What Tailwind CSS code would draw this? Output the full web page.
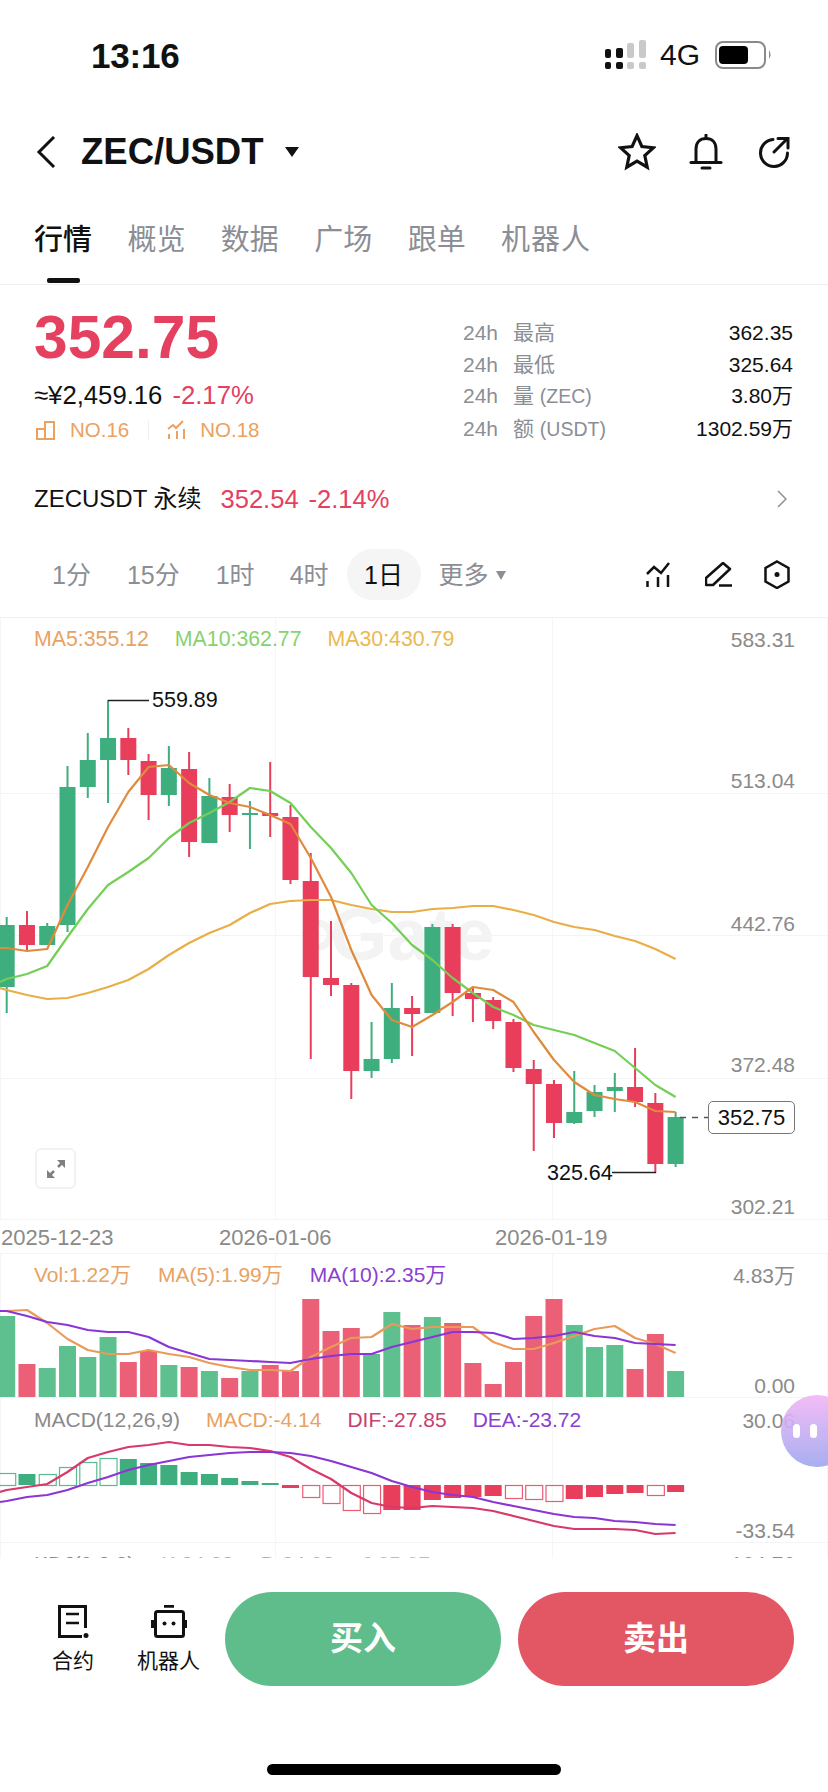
<!DOCTYPE html>
<html lang="zh">
<head>
<meta charset="utf-8">
<title>ZEC/USDT</title>
<script src="https://cdn.jsdelivr.net/npm/@tailwindcss/browser@4"></script>
</head>
<body class="bg-white">
<div class="relative w-[828px] h-[1792px] overflow-hidden bg-white text-[#111] font-['Liberation_Sans','Noto_Sans_CJK_SC',sans-serif]">

  <!-- status bar -->
  <div class="h-[110px] flex items-center justify-between pl-[91px] pr-[55px]">
    <span class="text-[35px] leading-[35px] font-bold tracking-[-0.2px]">13:16</span>
    <div class="flex items-center">
      <svg width="42" height="30" viewBox="606 40 42 30">
        <g fill="#111"><rect x="606" y="49" width="6" height="9" rx="2"/><rect x="617" y="48" width="7" height="10" rx="2"/><rect x="606" y="62" width="6" height="7" rx="2"/><rect x="617" y="62" width="7" height="7" rx="2"/></g>
        <g fill="#c9c9c9"><rect x="628" y="43" width="7" height="15" rx="2"/><rect x="640" y="40" width="7" height="18" rx="2"/><rect x="628" y="62" width="7" height="7" rx="2"/><rect x="640" y="62" width="7" height="7" rx="2"/></g>
      </svg>
      <span class="ml-[13px] text-[30px] leading-[30px]">4G</span>
      <svg class="ml-[15px]" width="58" height="28" viewBox="715 41 58 28">
        <rect x="716" y="42" width="49" height="26" rx="7" fill="none" stroke="#8a8a8a" stroke-width="2"/>
        <rect x="719" y="46" width="29" height="18" rx="4" fill="#000"/>
        <path d="M769 50q3 4.500 0 9z" fill="#8a8a8a"/>
      </svg>
    </div>
  </div>

  <!-- header -->
  <div class="h-[84px] flex items-center pl-[36px] pr-[38px]">
    <svg width="20" height="32" viewBox="0 0 20 32" fill="none" stroke="#111" stroke-width="3"><path d="M18 1 3 16l15 15"/></svg>
    <span class="ml-[25px] text-[36.500px] leading-[40px] font-bold">ZEC/USDT</span>
    <svg class="ml-[21px]" width="14" height="10" viewBox="0 0 14 10"><path d="M0 0h14L7 10z" fill="#111"/></svg>
    <div class="ml-auto flex items-center">
      <svg width="38" height="38" viewBox="0 0 36 36" fill="none" stroke="#111" stroke-width="3" stroke-linejoin="miter"><path d="M18 2.500l4.600 10.300 11 1.200-8.200 7.400 2.300 11L18 26.600 8.300 32.400l2.300-11L2.400 14l11-1.200z"/></svg>
      <svg class="ml-[33.500px]" width="34" height="36" viewBox="0 0 34 36" fill="none" stroke="#111" stroke-width="3" stroke-linecap="round"><path d="M7 28V15C7 8.500 11 4.500 17 4.500S27 8.500 27 15v13"/><path d="M2 28.500h30"/><path d="M17 1v3"/><path d="M13 34h8" stroke-width="3"/></svg>
      <svg class="ml-[35px]" width="32" height="32" viewBox="0 0 32 32" fill="none" stroke="#111" stroke-width="3" stroke-linecap="round"><path d="M15 3.500A13.500 13.500 0 1 0 29.500 17"/><path d="M16 16 29 3"/><path d="M20 2.500h10V12"/></svg>
    </div>
  </div>

  <!-- tabs -->
  <div class="h-[91px] flex gap-[35.400px] pl-[34px] pr-[35px] border-b border-[#efefef] text-[29px] leading-[28px] text-[#8b8e94]">
    <div class="flex flex-col items-center pt-[32px]"><span class="text-[#111] font-medium">行情</span><span class="mt-[24px] w-[33px] h-[5px] rounded-[2px] bg-[#111]"></span></div>
    <div class="pt-[32px]">概览</div>
    <div class="pt-[32px]">数据</div>
    <div class="pt-[32px]">广场</div>
    <div class="pt-[32px]">跟单</div>
    <div class="pt-[32px] tracking-[1px]">机器人</div>
  </div>

  <!-- price stats -->
  <div class="h-[185px] flex justify-between pl-[34px] pr-[35px]">
    <div class="pt-[22px]">
      <div class="text-[60.500px] leading-[60px] font-bold text-[#e5405f]">352.75</div>
      <div class="mt-[13px] flex text-[25.700px] leading-[30px] gap-[10px]"><span>≈¥2,459.16</span><span class="text-[#e5405f]">-2.17%</span></div>
      <div class="mt-[8px] flex items-center text-[20.500px] leading-[24px] text-[#eba15f]">
        <svg class="ml-[2px]" width="20" height="20" viewBox="0 0 20 20" fill="none" stroke="#eba15f" stroke-width="2"><path d="M1 9h8v10H1zM9 2h9v17H9z"/></svg>
        <span class="ml-[14px]">NO.16</span>
        <span class="ml-[19px] w-px h-[20px] bg-[#f0f0f0]"></span>
        <svg class="ml-[18px]" width="20" height="20" viewBox="0 0 20 20" fill="none" stroke="#eba15f" stroke-width="2"><path d="M1 9l5-4 3 3 7-7"/><path d="M2 14v5M10 11v8M17 9v10"/></svg>
        <span class="ml-[13px]">NO.18</span>
      </div>
    </div>
    <div class="pt-[32px] w-[330px] text-[21px] leading-[31.700px]">
      <div class="flex"><span class="w-[50px] text-[#8b8e94]">24h</span><span class="text-[#8b8e94]">最高</span><span class="ml-auto">362.35</span></div>
      <div class="flex"><span class="w-[50px] text-[#8b8e94]">24h</span><span class="text-[#8b8e94]">最低</span><span class="ml-auto">325.64</span></div>
      <div class="flex"><span class="w-[50px] text-[#8b8e94]">24h</span><span class="text-[#8b8e94]">量 <span class="text-[19.500px]">(ZEC)</span></span><span class="ml-auto">3.80万</span></div>
      <div class="flex"><span class="w-[50px] text-[#8b8e94]">24h</span><span class="text-[#8b8e94]">额 <span class="text-[19.500px]">(USDT)</span></span><span class="ml-auto">1302.59万</span></div>
    </div>
  </div>

  <!-- perpetual row -->
  <div class="h-[58px] flex items-center pl-[34px] pr-[41px] text-[24px] leading-[30px]">
    <span>ZECUSDT 永续</span>
    <span class="ml-[19px] text-[25.500px] text-[#e5405f]">352.54</span>
    <span class="ml-[10px] text-[25.500px] text-[#e5405f]">-2.14%</span>
    <svg class="ml-auto" width="10" height="18" viewBox="0 0 10 18" fill="none" stroke="#8b8e94" stroke-width="1.500"><path d="M1 1l8 8-8 8"/></svg>
  </div>

  <!-- timeframes -->
  <div class="h-[90px] flex items-start pt-[21px] pl-[52px] pr-[38px] border-b border-[#f1f1f1] text-[25px] leading-[53px] text-[#8b8e94]">
    <span>1分</span>
    <span class="ml-[36px]">15分</span>
    <span class="ml-[36px]">1时</span>
    <span class="ml-[35px]">4时</span>
    <span class="ml-[18px] w-[74px] h-[51px] rounded-full bg-[#f5f5f5] text-[#111] text-center leading-[53px]">1日</span>
    <span class="ml-[18px]">更多</span>
    <svg class="ml-[7px] mt-[22px]" width="10" height="9" viewBox="0 0 10 9"><path d="M0 0h10L5 9z" fill="#8b8e94"/></svg>
    <div class="ml-auto flex items-center h-[51px]">
      <svg width="25" height="26" viewBox="646 562 25 26" fill="none" stroke="#111" stroke-width="2.500"><path d="M647 574l7-7 7 6 8-10"/><path d="M647.500 581v6M658 577v10M668 575v12"/></svg>
      <svg class="ml-[34px]" width="28" height="26" viewBox="705 561 28 26" fill="none" stroke="#111" stroke-width="2.500" stroke-linejoin="round"><path d="M706 584v-7l17-15 7 6-17 16z"/><path d="M719 584.500h13"/></svg>
      <svg class="ml-[31px]" width="26" height="29" viewBox="764 560 26 29" fill="none" stroke="#111" stroke-width="2.500"><path d="M777 561.500l11.500 6.500v13.500l-11.500 6.500-11.500-6.500V568z"/><circle cx="777" cy="574.500" r="2.500" fill="#111" stroke="none"/></svg>
    </div>
  </div>

  <!-- chart canvas: y coordinates below are page y minus 618 -->
  <div class="relative h-[940px] overflow-hidden text-[21px] leading-[24px]">
    <span class="absolute left-[330px] top-[277px] text-[74px] leading-[80px] font-bold text-[#f3f3f3]">Gate</span>
    <svg id="chart" class="absolute left-0 top-0" width="828" height="940" viewBox="0 618 828 940"></svg>

    <div class="absolute left-[34px] top-[9px] flex gap-[26px] text-[21.300px]">
      <span class="text-[#e8a264]">MA5:355.12</span>
      <span class="text-[#86d26f]">MA10:362.77</span>
      <span class="text-[#eab94f]">MA30:430.79</span>
    </div>
    <span class="absolute left-[152px] top-[70px] text-[21.500px] text-[#111]">559.89</span>
    <span class="absolute left-[547px] top-[543px] text-[21.500px] text-[#111]">325.64</span>
    <div class="absolute left-[708px] top-[483px] w-[87px] h-[33px] flex items-center justify-center rounded-[5px] border border-[#777] bg-white text-[22px] text-[#111]">352.75</div>
    <div class="absolute left-[35px] top-[530px] w-[41px] h-[41px] flex items-center justify-center rounded-[6px] border-2 border-[#f2f2f2] bg-white">
      <svg width="20" height="20" viewBox="0 0 20 20" fill="none" stroke="#808080" stroke-width="2.500"><path d="M2 18 8 12M12 8l6-6"/><path d="M1 11v8h8z" fill="#808080" stroke="none"/><path d="M11 1h8v8z" fill="#808080" stroke="none"/></svg>
    </div>

    <span class="absolute right-[33px] top-[10px] text-[#8a8a8a]">583.31</span>
    <span class="absolute right-[33px] top-[151px] text-[#8a8a8a]">513.04</span>
    <span class="absolute right-[33px] top-[294px] text-[#8a8a8a]">442.76</span>
    <span class="absolute right-[33px] top-[435px] text-[#8a8a8a]">372.48</span>
    <span class="absolute right-[33px] top-[577px] text-[#8a8a8a]">302.21</span>

    <span class="absolute left-[1px] top-[608px] text-[22px] text-[#8a8a8a]">2025-12-23</span>
    <span class="absolute left-[219px] top-[608px] text-[22px] text-[#8a8a8a]">2026-01-06</span>
    <span class="absolute left-[495px] top-[608px] text-[22px] text-[#8a8a8a]">2026-01-19</span>

    <div class="absolute left-[34px] top-[645px] flex gap-[27px]">
      <span class="text-[#e8a264]">Vol:1.22万</span>
      <span class="text-[#e8a264]">MA(5):1.99万</span>
      <span class="text-[#8b3fd1]">MA(10):2.35万</span>
    </div>
    <span class="absolute right-[33px] top-[646px] text-[#8a8a8a]">4.83万</span>
    <span class="absolute right-[33px] top-[756px] text-[#8a8a8a]">0.00</span>

    <div class="absolute left-[34px] top-[790px] flex gap-[26px]">
      <span class="text-[#8a8a8a]">MACD(12,26,9)</span>
      <span class="text-[#e8a264]">MACD:-4.14</span>
      <span class="text-[#c9406f]">DIF:-27.85</span>
      <span class="text-[#8b3fd1]">DEA:-23.72</span>
    </div>
    <span class="absolute right-[33px] top-[791px] text-[#8a8a8a]">30.06</span>
    <span class="absolute right-[33px] top-[901px] text-[#8a8a8a]">-33.54</span>

    <div class="absolute left-[34px] top-[934px] flex gap-[27px]">
      <span class="text-[#8a8a8a]">KDJ(9,3,3)</span>
      <span class="text-[#e8a264]">K:34.38</span>
      <span class="text-[#86d26f]">D:34.98</span>
      <span class="text-[#eab94f]">J:35.07</span>
    </div>
    <span class="absolute right-[33px] top-[934px] text-[#8a8a8a]">104.76</span>
  </div>

  <!-- bottom action bar -->
  <div class="flex items-start pt-[34px] pl-[52px] pr-[34px]">
    <div class="w-[42px] flex flex-col items-center pt-[13px]">
      <svg width="32" height="33" viewBox="57 1605 32 33" fill="none" stroke="#111" stroke-width="3"><path d="M82 1636.500H59.500V1606.500H85.500V1628"/><path d="M66 1614h13M66 1623h13" stroke-width="2.500"/><circle cx="86" cy="1635.500" r="2.500" fill="#111" stroke="none"/></svg>
      <span class="mt-[12px] whitespace-nowrap text-[21px] leading-[22px]">合约</span>
    </div>
    <div class="ml-[43px] w-[63px] flex flex-col items-center pt-[13px]">
      <svg width="36" height="33" viewBox="151 1605 36 33" fill="none" stroke="#111" stroke-width="3"><path d="M164 1606h10" stroke-width="3.500"/><rect x="155.500" y="1611.500" width="28" height="25" rx="2"/><path d="M152.500 1620v8M185.500 1620v8"/><circle cx="164.500" cy="1623.500" r="2" fill="#111" stroke="none"/><circle cx="173.500" cy="1623.500" r="2" fill="#111" stroke="none"/></svg>
      <span class="mt-[12px] whitespace-nowrap text-[21px] leading-[22px]">机器人</span>
    </div>
    <div class="ml-[25px] w-[276px] h-[94px] flex items-center justify-center rounded-full bg-[#5fbd8b] text-white text-[33px] font-bold">买入</div>
    <div class="ml-[17px] w-[276px] h-[94px] flex items-center justify-center rounded-full bg-[#e35765] text-white text-[33px] font-bold">卖出</div>
  </div>

  <div class="mt-[78px] mx-auto w-[294px] h-[11px] rounded-full bg-black"></div>

  <!-- floating assistant bubble -->
  <div class="absolute left-[781px] top-[1395px] w-[72px] h-[72px] flex items-center gap-[10px] pl-[12px] rounded-full opacity-90 bg-linear-to-b from-[#f2b5f7] to-[#9ea6ef]">
    <span class="w-[7px] h-[14px] rounded-full bg-white"></span>
    <span class="w-[7px] h-[14px] rounded-full bg-white"></span>
  </div>
</div>

<script>
  var GREEN = '#3fae7f', RED = '#e83e5c', VG = '#5fc08f', VR = '#ec6077';
  var X = function (i) { return 6.7 + 20.27 * i; };
  // [up, wickTop, bodyTop, bodyBottom, wickBottom]
  var candles = [
    [1,917,925,987,1013],[0,911,925,945,950],[1,923,926,945,945],[1,766,787,925,932],[1,733,760,787,798],
    [1,700,738,760,803],[0,728,738,760,775],[0,754,761,795,820],[1,746,768,795,806],[0,752,769,842,857],
    [1,778,796,843,843],[0,784,797,815,832],[1,801,813,815,849],[0,762,813,816,837],[0,805,817,880,884],
    [0,853,881,977,1059],[0,921,978,985,996],[0,983,985,1071,1099],[1,1022,1059,1071,1078],[1,983,1008,1059,1063],
    [0,996,1008,1014,1056],[1,924,927,1013,1013],[0,924,927,993,1016],[0,987,993,999,1022],[0,997,1000,1021,1029],
    [0,1019,1022,1068,1072],[0,1060,1069,1084,1151],[0,1080,1084,1123,1138],[1,1071,1112,1123,1124],[1,1085,1092,1111,1117],
    [1,1073,1087,1091,1112],[0,1048,1087,1102,1107],[0,1093,1103,1164,1173],[1,1112,1117,1164,1167]
  ];
  var ma5 = [948,951,949,905,867,827,792,767,765,783,795,803,807,815,824,858,897,950,995,1020,1027,1015,1002,987,990,1002,1032,1060,1082,1095,1099,1102,1111,1112];
  var ma10 = [979,974,966,937,909,885,872,858,838,823,813,802,788,791,803,827,848,873,905,923,945,960,978,993,1007,1015,1025,1030,1035,1043,1051,1068,1085,1097];
  var ma30 = [990,995,999,998,993,987,980,969,955,943,933,925,913,904,901,900,900,905,909,912,912,909,908,906,906,910,915,922,927,930,936,941,949,959];
  var vol = [1316,1364,1368,1346,1357,1337,1362,1351,1365,1367,1371,1378,1371,1365,1371,1299,1331,1328,1354,1312,1325,1317,1323,1363,1384,1362,1316,1299,1325,1347,1345,1369,1334,1371];
  var vma5 = [1311,1310,1323,1339,1350,1354,1354,1350,1354,1357,1363,1367,1370,1370,1371,1357,1347,1338,1337,1324,1329,1327,1327,1327,1342,1349,1349,1343,1336,1329,1326,1338,1344,1353];
  var vma10 = [1311,1316,1322,1325,1330,1332,1332,1337,1347,1353,1359,1360,1361,1362,1363,1359,1356,1354,1354,1347,1342,1337,1332,1332,1333,1339,1338,1336,1332,1336,1338,1343,1344,1345];
  // [end y, hollow]
  var hist = [[1473,1],[1474,0],[1474,1],[1467,1],[1462,1],[1458,1],[1459,0],[1463,0],[1465,0],[1472,0],[1474,0],[1478,0],[1481,0],[1483,0],
    [1488,0],[1497,1],[1503,1],[1510,1],[1513,1],[1510,0],[1510,0],[1500,0],[1498,0],[1497,0],[1496,0],[1498,1],[1499,1],[1501,1],[1499,0],[1497,0],[1494,0],[1493,0],[1495,1],[1492,0]];
  var dif = [1490,1487,1484,1472,1458,1452,1447,1445,1442,1445,1445,1447,1448,1451,1457,1469,1479,1493,1503,1507,1508,1506,1507,1508,1511,1516,1521,1526,1529,1529,1529,1530,1534,1533];
  var dea = [1501,1497,1495,1490,1483,1477,1470,1465,1461,1457,1455,1453,1452,1452,1453,1456,1461,1467,1473,1481,1487,1492,1495,1497,1502,1506,1510,1514,1517,1518,1521,1522,1524,1525];

  var s = '';
  function rect(x, y, w, h, fill, extra) { s += '<rect x="' + x + '" y="' + y + '" width="' + w + '" height="' + h + '" fill="' + fill + '" ' + (extra || '') + '/>'; }
  function line(x1, y1, x2, y2, c, w, extra) { s += '<line x1="' + x1 + '" y1="' + y1 + '" x2="' + x2 + '" y2="' + y2 + '" stroke="' + c + '" stroke-width="' + w + '" ' + (extra || '') + '/>'; }
  function poly(arr, c, w, first) {
    var p = first ? ['0,' + first] : [];
    arr.forEach(function (y, i) { p.push(X(i).toFixed(1) + ',' + y); });
    s += '<polyline fill="none" stroke="' + c + '" stroke-width="' + w + '" stroke-linejoin="round" points="' + p.join(' ') + '"/>';
  }

  var G = '#f4f4f4', V = '#f6f6f6';
  [793, 935, 1078, 1219, 1253, 1397, 1542].forEach(function (y) { line(0, y + 0.5, 828, y + 0.5, G, 1); });
  [[275.5, 618, 1219], [552.5, 618, 1219], [275.5, 1253, 1558], [552.5, 1253, 1558], [0.5, 618, 1219], [827.5, 618, 1219], [0.5, 1253, 1558], [827.5, 1253, 1558]].forEach(function (v) { line(v[0], v[1], v[0], v[2], V, 1); });
  s += '<circle cx="318" cy="935" r="12" fill="none" stroke="#f3f3f3" stroke-width="7"/>';

  candles.forEach(function (c, i) {
    var col = c[0] ? GREEN : RED, x = X(i);
    line(x, c[1], x, c[4], col, 2);
    rect(x - 8, c[2], 16, c[3] - c[2], col);
  });
  poly(ma30, '#e9ae45', 2.2, 988);
  poly(ma10, '#73cf55', 2.2, 982);
  poly(ma5, '#e08a3c', 2.2, 948);

  line(108, 700.5, 149, 700.5, '#222', 1.5);
  line(612, 1172.5, 656, 1172.5, '#222', 1.5);
  line(680, 1117.5, 708, 1117.5, '#555', 1.5, 'stroke-dasharray="6 6"');

  vol.forEach(function (y, i) {
    rect(X(i) - 8.5, y, 17, 1397 - y, candles[i][0] ? VG : VR);
  });
  poly(vma5, '#ea9a58', 2.2, 1311);
  poly(vma10, '#8b35d6', 2.2, 1311);

  hist.forEach(function (h, i) {
    var up = i < 14, col = up ? GREEN : RED, x = X(i) - 8.5, top = Math.min(h[0], 1485), bot = Math.max(h[0], 1485);
    if (h[1]) rect(x + 0.5, top + 0.5, 17, bot - top, 'white', 'fill-opacity="0" stroke="' + col + '" stroke-width="1.2" stroke-opacity="0.85"');
    else rect(x, top, 17, bot - top, col);
  });
  poly(dif, '#d8386a', 2.2, 1492);
  poly(dea, '#8b35d6', 2.2, 1502);

  document.getElementById('chart').innerHTML = s;
</script>
</body>
</html>
